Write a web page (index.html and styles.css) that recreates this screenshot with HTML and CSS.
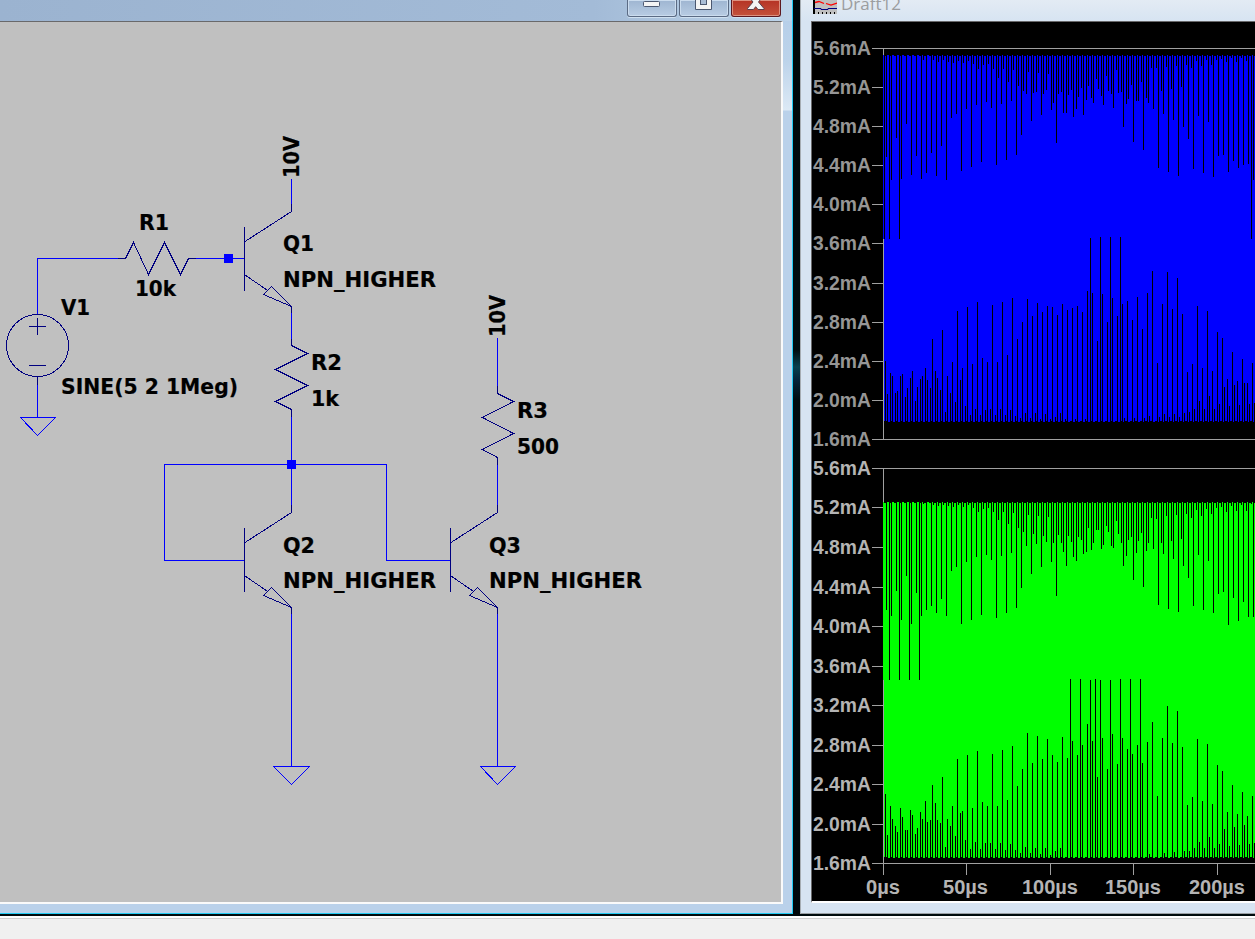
FILE: index.html
```html
<!DOCTYPE html>
<html lang="en">
<head>
<meta charset="utf-8">
<title>Draft12</title>
<link rel="stylesheet" href="styles.css">
</head>
<body>
<div class="desktop">
  <section class="window schematic-window">
    <header class="titlebar">
      <div class="buttons">
        <span class="button"><svg width="50" height="17"><rect x="16.5" y="1.5" width="16" height="5" rx="1" fill="#f4f4f4" stroke="#4c5870"/></svg></span>
        <span class="button"><svg width="50" height="17"><path d="M16.500 -2V9.500H32.500V-2" fill="#f4f4f4" stroke="#4c5870"/><rect x="21.500" y="-2" width="6" height="6.500" fill="#a9bdd6" stroke="#4c5870"/></svg></span>
        <span class="button close"><svg width="50" height="17"><path d="M18-3L22 2L16.500 8.500V9.500H22.500L24.700 6.700L27 9.500H33V8.500L27.500 2L31.500-3" fill="#f4f4f4" stroke="#59404c"/></svg></span>
      </div>
    </header>
    <div class="schematic">
      <svg width="781" height="881" viewBox="0 22 781 881">
        <g class="wire">
          <path d="M37.500 314V258.500H119M195 258.500H244M37.500 377V417.500M20.500 417.500H55.500L37.500 435.500Z"/>
          <path d="M291.500 179V205M291.500 306V340M291.500 416V512M244 560.500H164.500V464.500H386.500V560.500H450M291.500 607V766.500M273.500 766.500H309.500L291.500 784.500Z"/>
          <path d="M497.500 338V392M497.500 460V512M497.500 607V766.500M480.500 766.500H515.500L497.500 784.500Z"/>
        </g>
        <g class="part">
          <circle cx="37.500" cy="345.500" r="31"/>
          <path d="M29 326.500H46M37.500 318V335M29 365.500H46M37.500 377V385"/>
          <path d="M118 258.500H125.500L133.500 242.500L148.500 274.500L164.500 242.500L180.500 274.500L188.500 258.500H196"/>
          <path d="M291.500 339V345.500L307.500 353.500L275.500 369.500L307.500 385.500L275.500 401.500L291.500 409.500V417"/>
          <path d="M497.500 386V393.500L513.500 401.500L482.500 417.500L513.500 433.500L482.500 449.500L497.500 457.500V465"/>
          <g id="npn"><path d="M244.500 227V291M245 241.500L291.500 211.500V204M245 275L267 290M263.500 294.500L271.500 286.500L291.500 306.500ZM291.500 306V313"/></g>
          <use href="#npn" y="301"/>
          <use href="#npn" x="206" y="301"/>
        </g>
        <g class="node"><rect x="224" y="254" width="9" height="9"/><rect x="287" y="460" width="9" height="9"/></g>
        <g class="label">
          <text x="139" y="230" textLength="30">R1</text>
          <text x="135" y="296" textLength="41">10k</text>
          <text x="61" y="315" textLength="29">V1</text>
          <text x="61" y="394" textLength="177">SINE(5 2 1Meg)</text>
          <text x="283" y="251" textLength="31">Q1</text>
          <text x="283" y="287" textLength="153">NPN_HIGHER</text>
          <text x="311" y="370" textLength="31">R2</text>
          <text x="311" y="406" textLength="28">1k</text>
          <text x="517" y="418" textLength="31">R3</text>
          <text x="517" y="454" textLength="42">500</text>
          <text x="283" y="553" textLength="32">Q2</text>
          <text x="283" y="588" textLength="153">NPN_HIGHER</text>
          <text x="489" y="553" textLength="32">Q3</text>
          <text x="489" y="588" textLength="153">NPN_HIGHER</text>
          <text transform="translate(299 178) rotate(-90)" textLength="42">10V</text>
          <text transform="translate(505 337) rotate(-90)" textLength="42">10V</text>
        </g>
      </svg>
    </div>
  </section>
  <div class="gap"></div>
  <section class="window plot-window">
    <header class="plot-title">
      <svg class="app-icon" width="24" height="14"><rect width="24" height="14" fill="#bfbfbf"/><path d="M1 0V14" stroke="#000" stroke-width="2"/><path d="M1 13H24" stroke="#000" stroke-width="2" stroke-dasharray="1 3"/><path d="M2 2.500l4-1 5 2M13 3.500l5 1.500 6-2" stroke="#f00" stroke-width="1.300" fill="none"/><path d="M1 8.500H8V9.500H15V8.500H24" stroke="#000080" fill="none"/></svg>
      <span>Draft12</span>
    </header>
    <div class="plot"><svg id="plot" width="443" height="879" viewBox="812 22 443 879"></svg></div>
  </section>
</div>
<footer class="statusbar"></footer>
<script src="plot.js"></script>
</body>
</html>
```
FILE: styles.css
```css
* { box-sizing: border-box; }
body {
  margin: 0;
  width: 1255px;
  height: 939px;
  overflow: hidden;
  display: flex;
  flex-direction: column;
  background: #f0f0f0;
}
svg { display: block; }
.desktop { display: flex; height: 916px; background: #000b0d; }
.window { display: flex; flex-direction: column; flex: none; }
.schematic-window {
  width: 793px;
  height: 914px;
  padding-right: 9px;
  border-right: 1px solid #20ccf4;
  border-bottom: 1px solid #20ccf4;
  background: linear-gradient(#b4cde8 0, #bcd3ea 60px, #dce9f5 110px, #bad1ea 111px);
}
.titlebar {
  height: 21px;
  margin-right: -9px;
  padding-right: 11px;
  display: flex;
  justify-content: flex-end;
  background: linear-gradient(90deg, #9bb3d0, #a3bbd7 75%, #bdd4ea);
}
.buttons { display: flex; gap: 2px; }
.button {
  width: 50px;
  height: 17px;
  border: 1px solid #5b6b84;
  border-top: 0;
  border-radius: 0 0 3px 3px;
  background: linear-gradient(#9eb5d1, #b8cce3);
  box-shadow: inset 0 0 0 1px #cbdcee, 0 1px 0 #cfe0f0;
  overflow: hidden;
}
.button svg { margin-left: -1px; }
.close { border-color: #5c1820; background: linear-gradient(#b53324, #c4513b); box-shadow: inset 0 0 0 1px #dc907f, 0 1px 0 #cfe0f0; }
.schematic {
  height: 883px;
  width: 783px;
  border-top: 1px solid #69696b;
  border-right: 2px solid #fafafa;
  border-bottom: 2px solid #fafafa;
  background: #c0c0c0;
  overflow: hidden;
}
.wire, .part { fill: none; stroke-width: 1; shape-rendering: crispEdges; }
.wire { stroke: #0000ff; }
.part { stroke: #000080; }
.node { fill: #0000ff; }
.label text { font: bold 21px "DejaVu Sans", sans-serif; fill: #000; stroke: #000; stroke-width: .2px; }
.gap { width: 7px; background: linear-gradient(#00080a 0, #000d10 350px, #06404e 367px, #04243a 380px, #000d10 400px, #00080a); }
.plot-window {
  width: 455px;
  height: 914px;
  padding-left: 10px;
  border-left: 1px solid #a6adb3;
  border-bottom: 1px solid #9aa0a4;
  background: #d7e4f2;
}
.plot-title {
  height: 21px;
  margin-left: -10px;
  padding-left: 12px;
  display: flex;
  gap: 4px;
  overflow: hidden;
  background: linear-gradient(#e3ebf4, #d7e4f2);
  color: #9b9da0;
  font: 17px/22px "Open Sans", sans-serif;
}
.plot-title span { margin-top: -7px; }
.plot {
  width: 444px;
  height: 882px;
  border-top: 1px solid #69696b;
  border-left: 1px solid #69696b;
  border-bottom: 2px solid #fff;
  background: #000;
  overflow: hidden;
}
.axis { stroke: #a0a0a0; stroke-width: 1; fill: none; shape-rendering: crispEdges; }
.axis-label text { font: bold 19.500px "Liberation Sans", sans-serif; }
.upper { fill: #969696; }
.lower { fill: #b4b4b4; }
.statusbar { height: 23px; border-top: 1px solid #fff; background: linear-gradient(#fff 1px, #cfcfcf 1px, #cfcfcf 2px, #f0f0f0 2px); }
```
FILE: plot.js
```javascript
// Each pair is the column and the row where the gap in the trace ends.
const traces = [
  {
    color: '#0000ff', top: 55, bottom: 421,
    down: `884,239 886,157 889,239 891,180 896,138 899,239 901,179 906,124 911,175 916,156 921,179 926,173 931,153 936,176 941,146 946,180 951,118 956,114 961,171 966,109 971,167 976,105 981,162 986,102 991,108 996,165 1001,104 1006,160 1011,101 1016,155 1021,135 1026,94 1031,121 1036,92 1041,115 1051,110 1056,143 1061,92
      923,60 933,60 938,62 943,60 948,62 953,63 958,61 963,63 968,61 973,64 978,69 983,65 988,64 993,69 998,78 1003,69 1008,82 1013,70 1018,86 1023,91 1028,72 1033,93 1038,73 1043,94 1046,90 1048,74 1053,103 1058,94 1063,113
      1066,113 1068,95 1071,90 1073,117 1076,109 1078,97 1081,88 1083,115 1086,100 1088,86 1091,98 1093,103 1096,79 1098,89 1101,96 1103,105 1106,76 1108,91 1111,94 1113,108 1116,70 1118,93 1121,92 1123,127 1126,104 1128,99 1131,85 1133,142 1136,101 1138,101 1141,82 1143,150 1146,98 1148,103 1151,68 1153,109 1156,68 1158,168 1161,91 1163,114 1166,67 1168,172 1171,89 1173,120 1176,66 1178,176 1181,87 1183,127 1186,65 1188,139 1191,68 1193,169 1196,61 1198,116 1201,66 1203,173 1206,60 1208,122 1211,65 1213,177 1216,60 1218,156 1221,59 1223,155 1226,62 1228,172 1231,58 1233,161 1236,62 1238,168 1241,58 1243,165 1246,61 1248,164 1251,239 1253,180`,
    up: `885,361 887,394 890,373 892,376 895,393 897,391 900,376 902,374 905,397 907,388 910,378 912,371 915,401 917,387 920,379 922,376 925,368 927,380 930,388 932,339 935,371 937,378 940,390 942,330 945,412 947,376 950,393 952,362 955,402 957,311 960,380 962,368 965,406 967,307 970,415 972,364 975,409 977,302 980,415 982,358 985,410 987,362 990,409 992,305 995,415 997,362 1000,409 1002,302 1005,415 1007,355 1010,410 1012,298 1015,416 1017,339 1020,418 1022,322 1025,413 1027,299 1030,418 1032,316 1035,413 1037,303 1040,419 1042,312 1045,414 1047,306 1050,419 1052,307 1055,417 1057,315 1060,413 1062,304
      1065,419 1067,310 1072,308 1075,419 1077,306 1082,312 1085,419 1087,291 1090,238 1092,293 1097,341 1100,237 1102,294 1107,322 1110,237 1112,298 1117,316 1120,237 1122,304 1124,418 1127,301 1132,320 1134,418 1137,297 1142,329 1144,418 1147,293 1149,416 1152,271 1157,363 1159,417 1162,304 1164,414 1167,272 1169,417 1172,309 1174,414 1177,278 1179,417 1182,314 1184,413 1187,372 1189,412 1192,364 1194,409 1197,306 1199,401 1202,368 1204,409 1207,311 1209,396 1212,371 1214,409 1217,332 1219,404 1222,338 1224,387 1227,379 1229,406 1232,352 1234,385 1237,381 1239,405 1242,359 1244,383 1247,383 1249,404 1252,363 1254,403`
  },
  {
    color: '#00ff00', top: 502, bottom: 857,
    down: `886,610 889,680 891,616 896,591 899,680 901,620 906,576 909,680 911,624 916,593 919,680 921,616 926,610 931,606 936,613 941,599 946,616 951,571 956,567 961,624 966,562 971,620 976,557 981,615 986,555 991,560 996,618 1001,556 1006,613 1011,553 1016,608 1021,588 1026,546 1031,574 1036,544 1041,567 1046,542 1051,562 1056,596 1061,543
      923,504 933,505 938,506 943,505 948,506 953,507 958,505 963,507 968,505 973,508 978,512 983,509 988,508 993,512 998,520 1003,512 1008,524 1013,513 1018,528 1023,532 1028,515 1033,534 1038,516 1043,536 1048,517 1053,543 1058,535 1063,552
      1066,566 1068,536 1071,542 1073,557 1076,561 1078,537 1081,540 1083,554 1086,552 1088,528 1091,550 1093,543 1096,530 1098,530 1101,549 1103,545 1106,526 1108,532 1111,546 1113,548 1116,521 1118,534 1121,543 1123,566 1126,556 1128,540 1131,537 1133,580 1136,553 1138,541 1141,533 1143,587 1146,551 1148,543 1151,518 1153,549 1156,519 1158,605 1161,543 1163,554 1166,516 1168,609 1171,541 1173,559 1176,515 1178,612 1181,539 1183,566 1186,514 1188,578 1191,518 1193,606 1196,510 1198,555 1201,516 1203,610 1206,509 1208,561 1211,514 1213,613 1216,508 1218,594 1221,507 1223,592 1226,512 1228,625 1231,506 1233,598 1236,511 1238,621 1241,505 1243,602 1246,511 1248,617 1251,504 1253,617`,
    up: `885,794 887,835 890,806 892,819 895,826 897,832 900,808 902,817 905,830 907,830 910,810 912,815 915,834 917,828 920,812 922,819 925,801 927,822 930,820 932,785 935,803 937,820 940,823 942,777 945,847 947,819 950,826 952,806 955,836 957,759 960,813 962,811 965,840 967,755 970,849 972,808 975,842 977,751 980,849 982,802 985,843 987,806 990,843 992,754 995,849 997,806 1000,843 1002,750 1005,850 1007,800 1010,844 1012,746 1015,850 1017,786 1020,853 1022,769 1025,847 1027,733 1030,853 1032,763 1035,848 1037,736 1040,854 1042,759 1045,848 1047,739 1050,855 1052,755 1055,851 1057,762 1060,848 1062,737
      1067,758 1070,679 1072,741 1077,755 1080,679 1082,745 1087,724 1090,680 1092,741 1095,679 1097,777 1100,680 1102,738 1107,769 1110,680 1112,734 1117,764 1120,679 1122,738 1127,749 1130,679 1132,754 1137,745 1140,679 1142,763 1147,742 1149,854 1152,722 1157,796 1162,738 1164,853 1167,706 1172,743 1174,852 1177,711 1182,747 1184,851 1187,805 1189,851 1192,797 1194,848 1197,739 1199,842 1202,801 1204,848 1207,744 1209,837 1212,804 1214,848 1217,765 1219,844 1222,771 1224,829 1227,812 1229,846 1232,785 1234,827 1237,814 1239,845 1242,792 1244,825 1247,816 1249,844 1252,796 1254,843`
  }
];
const rows = [
  [48, 87, 126, 165, 204, 243, 283, 322, 361, 400, 439],
  [468, 507, 547, 587, 626, 666, 705, 745, 784, 824, 863]
];
const labels = ['5.6', '5.2', '4.8', '4.4', '4.0', '3.6', '3.2', '2.8', '2.4', '2.0', '1.6'];

const pairs = text => text.trim().split(/\s+/).map(p => p.split(',').map(Number));
let art = '';

// Axes and ticks
let axis = '';
for (const ys of rows) {
  axis += `M883.5 ${ys[0]}V${ys[10]}M872 ${ys[0] + .5}H1255M872 ${ys[10] + .5}H1255`;
  for (const y of ys) axis += `M872 ${y + .5}H883`;
}
for (const x of [883, 966, 1050, 1133, 1217]) axis += `M${x + .5} 863V875`;
art += `<path class="axis" d="${axis}"/>`;

// Traces, then the gaps cut into them
for (const t of traces) {
  const green = t.top > 400;
  art += `<rect x="883" y="${t.top}" width="1" height="${green ? 178 : 184}" fill="${t.color}"/>`;
  art += `<rect x="884" y="${t.top}" width="371" height="${t.bottom - t.top}" fill="${t.color}"/>`;
  let cut = '', edge = '';
  for (const [x, y] of pairs(t.down)) cut += `M${x} ${t.top}h1V${y}h-1z`;
  for (const [x, y] of pairs(t.up)) cut += `M${x} ${y}h1V${t.bottom + 1}h-1z`;
  for (let x = 884; x < 1255; x += 5) {
    cut += `M${x} ${t.top}h2v1h-2z`;
    edge += `M${x + 4} ${t.bottom}h2v1h-2z`;
  }
  art += `<path fill="${t.color}" d="${edge}"/><path shape-rendering="crispEdges" d="${cut}"/>`;
}

// Axis captions
rows.forEach((ys, i) => {
  art += `<g class="axis-label ${i ? 'lower' : 'upper'}">`;
  ys.forEach((y, k) => {
    art += `<text x="813" y="${y + 7}" textLength="58" lengthAdjust="spacingAndGlyphs">${labels[k]}mA</text>`;
  });
  art += '</g>';
});
art += '<g class="axis-label lower">';
for (const [x, w, s] of [[866, 34, '0'], [943, 45, '50'], [1022, 56, '100'], [1105, 56, '150'], [1189, 56, '200']]) {
  art += `<text x="${x}" y="894" textLength="${w}" lengthAdjust="spacingAndGlyphs">${s}µs</text>`;
}
art += '</g>';
document.getElementById('plot').innerHTML = art;
document.querySelectorAll('.label text').forEach(t => t.setAttribute('lengthAdjust', 'spacingAndGlyphs'));
```
